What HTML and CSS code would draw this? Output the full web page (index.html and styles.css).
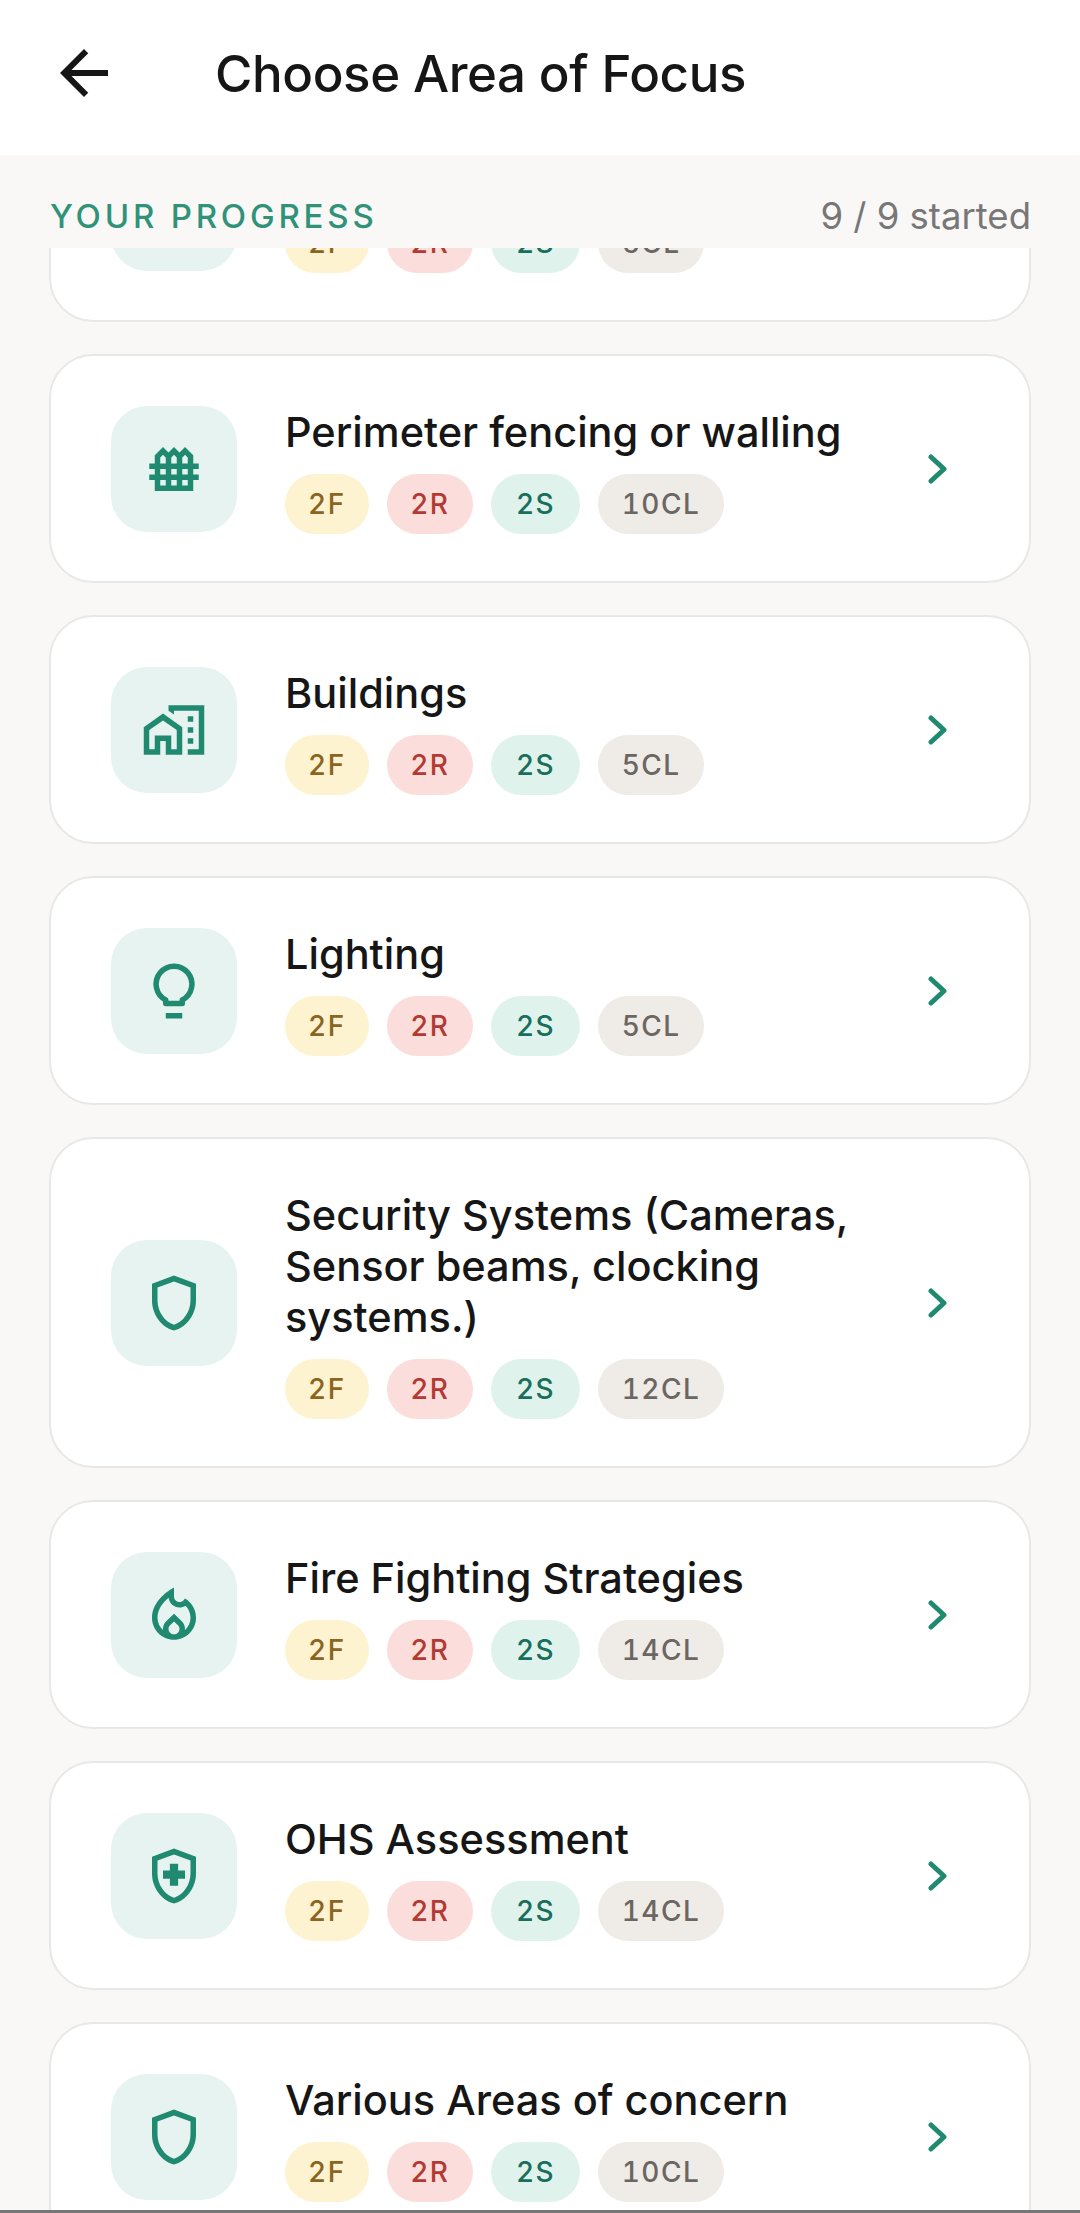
FILE: index.html
```html
<!DOCTYPE html>
<html lang="en">
  <head>
    <meta charset="UTF-8" />
    <meta name="viewport" content="width=device-width, initial-scale=1.0" />
    <title>Choose Area of Focus</title>
    <link rel="stylesheet" href="styles.css">
  </head>

  <body>
    <header class="topbar">
      <svg class="back-icon" viewBox="0 0 24 24"><path d="M20 11H7.83l5.59-5.59L12 4l-8 8 8 8 1.41-1.41L7.83 13H20v-2z" /></svg>
      <h1>Choose Area of Focus</h1>
    </header>

    <div class="progress">
      <span class="progress-label">YOUR PROGRESS</span>
      <span class="progress-count">9 / 9 started</span>
    </div>

    <main class="list-clip">
      <div class="list">

        <!-- scrolled almost out of view -->
        <div class="card">
          <div class="tile"></div>
          <div class="card-body">
            <div class="card-title">Access Control</div>
            <div class="chips">
              <span class="chip chip-f">2F</span>
              <span class="chip chip-r">2R</span>
              <span class="chip chip-s">2S</span>
              <span class="chip chip-cl">6CL</span>
            </div>
          </div>
          <svg class="chevron" viewBox="0 0 20 30"><path d="M3 3l13 12L3 27" /></svg>
        </div>

        <div class="card">
          <div class="tile">
            <svg class="tile-icon" viewBox="0 0 24 24"><path d="M21 12v-2h-2V7l-3-3-2 2-2-2-2 2-2-2-3 3v3H3v2h2v2H3v2h2v4h14v-4h2v-2h-2v-2h2z M16 6.83l1 1V10h-2V7.83l.41-.41.59-.59z M12 6.83l1 1V10h-2V7.83l.41-.41.59-.59z M11 14v-2h2v2h-2z M13 16v2h-2v-2h2z M9 10H7V7.83l1-1 .59.59.41.41V10z M7 12h2v2H7v-2z M7 16h2v2H7v-2z M17 18h-2v-2h2v2z M17 14h-2v-2h2v2z" /></svg>
          </div>
          <div class="card-body">
            <div class="card-title">Perimeter fencing or walling</div>
            <div class="chips">
              <span class="chip chip-f">2F</span>
              <span class="chip chip-r">2R</span>
              <span class="chip chip-s">2S</span>
              <span class="chip chip-cl">10CL</span>
            </div>
          </div>
          <svg class="chevron" viewBox="0 0 20 30"><path d="M3 3l13 12L3 27" /></svg>
        </div>

        <div class="card">
          <div class="tile">
            <svg class="tile-icon" viewBox="0 0 24 24"><path d="M1 11v10h6v-5h2v5h6V11L8 6 1 11z M13 19h-2v-5H5v5H3v-7l5-3.5 5 3.5v7z M10 3v1.97l2 1.43V5h9v14h-4v2h6V3H10z M17 7h2v2h-2z M17 11h2v2h-2z M17 15h2v2h-2z" /></svg>
          </div>
          <div class="card-body">
            <div class="card-title">Buildings</div>
            <div class="chips">
              <span class="chip chip-f">2F</span>
              <span class="chip chip-r">2R</span>
              <span class="chip chip-s">2S</span>
              <span class="chip chip-cl">5CL</span>
            </div>
          </div>
          <svg class="chevron" viewBox="0 0 20 30"><path d="M3 3l13 12L3 27" /></svg>
        </div>

        <div class="card">
          <div class="tile">
            <svg class="tile-icon tile-icon-line" viewBox="0 0 24 24"><path d="M9 15.27A6.5 6.5 0 1 1 15 15.27V16.5H9Z" /><path d="M9 21h6" /></svg>
          </div>
          <div class="card-body">
            <div class="card-title">Lighting</div>
            <div class="chips">
              <span class="chip chip-f">2F</span>
              <span class="chip chip-r">2R</span>
              <span class="chip chip-s">2S</span>
              <span class="chip chip-cl">5CL</span>
            </div>
          </div>
          <svg class="chevron" viewBox="0 0 20 30"><path d="M3 3l13 12L3 27" /></svg>
        </div>

        <div class="card">
          <div class="tile">
            <svg class="tile-icon" viewBox="0 0 24 24"><path d="M12 2L4 5v6.09c0 5.05 3.41 9.76 8 10.91 4.59-1.15 8-5.86 8-10.91V5l-8-3z M18 11.09c0 4-2.55 7.7-6 8.83-3.45-1.13-6-4.82-6-8.83v-4.7l6-2.25 6 2.25v4.7z" /></svg>
          </div>
          <div class="card-body">
            <div class="card-title">Security Systems (Cameras, Sensor beams, clocking systems.)</div>
            <div class="chips">
              <span class="chip chip-f">2F</span>
              <span class="chip chip-r">2R</span>
              <span class="chip chip-s">2S</span>
              <span class="chip chip-cl">12CL</span>
            </div>
          </div>
          <svg class="chevron" viewBox="0 0 20 30"><path d="M3 3l13 12L3 27" /></svg>
        </div>

        <div class="card">
          <div class="tile">
            <svg class="tile-icon" viewBox="0 0 24 24"><path d="M16 6l-.44.55c-.42.52-.98.75-1.54.75C13 7.3 12 6.52 12 5.3V2S4 6 4 13c0 4.42 3.58 8 8 8s8-3.58 8-8c0-2.96-1.61-5.62-4-7z M12 19c-1.1 0-2-.87-2-1.94 0-.51.2-.97.58-1.34L12 14.33l1.43 1.4c.37.37.57.82.57 1.33 0 1.07-.9 1.94-2 1.94z M15.96 17.5c.04-.36.22-1.89-1.13-3.22L12 11.5l-2.83 2.78C7.81 15.62 8 17.16 8.04 17.5 6.79 16.4 6 14.79 6 13c0-3.16 2.13-5.65 4.03-7.25.23 1.99 1.93 3.55 3.99 3.55.78 0 1.54-.23 2.18-.66C17.34 9.78 18 11.35 18 13c0 1.79-.79 3.4-2.04 4.5z" /></svg>
          </div>
          <div class="card-body">
            <div class="card-title">Fire Fighting Strategies</div>
            <div class="chips">
              <span class="chip chip-f">2F</span>
              <span class="chip chip-r">2R</span>
              <span class="chip chip-s">2S</span>
              <span class="chip chip-cl">14CL</span>
            </div>
          </div>
          <svg class="chevron" viewBox="0 0 20 30"><path d="M3 3l13 12L3 27" /></svg>
        </div>

        <div class="card">
          <div class="tile">
            <svg class="tile-icon" viewBox="0 0 24 24"><path d="M10.5 13H8v-3h2.5V7.5h3V10H16v3h-2.5v2.5h-3V13z M12 4.14l6 2.25v4.7c0 4.02-2.55 7.7-6 8.83-3.45-1.13-6-4.81-6-8.83v-4.7l6-2.25z M12 2L4 5v6.09c0 5.05 3.41 9.76 8 10.91 4.59-1.15 8-5.86 8-10.91V5l-8-3z" /></svg>
          </div>
          <div class="card-body">
            <div class="card-title">OHS Assessment</div>
            <div class="chips">
              <span class="chip chip-f">2F</span>
              <span class="chip chip-r">2R</span>
              <span class="chip chip-s">2S</span>
              <span class="chip chip-cl">14CL</span>
            </div>
          </div>
          <svg class="chevron" viewBox="0 0 20 30"><path d="M3 3l13 12L3 27" /></svg>
        </div>

        <div class="card">
          <div class="tile">
            <svg class="tile-icon" viewBox="0 0 24 24"><path d="M12 2L4 5v6.09c0 5.05 3.41 9.76 8 10.91 4.59-1.15 8-5.86 8-10.91V5l-8-3z M18 11.09c0 4-2.55 7.7-6 8.83-3.45-1.13-6-4.82-6-8.83v-4.7l6-2.25 6 2.25v4.7z" /></svg>
          </div>
          <div class="card-body">
            <div class="card-title">Various Areas of concern</div>
            <div class="chips">
              <span class="chip chip-f">2F</span>
              <span class="chip chip-r">2R</span>
              <span class="chip chip-s">2S</span>
              <span class="chip chip-cl">10CL</span>
            </div>
          </div>
          <svg class="chevron" viewBox="0 0 20 30"><path d="M3 3l13 12L3 27" /></svg>
        </div>

      </div>
    </main>

    <div class="bottom-edge"></div>
  </body>
</html>
```

FILE: styles.css
```css
body {
  font-family: "Inter", sans-serif;
  margin: 0;
  padding: 0;
  height: 100vh;
  overflow: hidden;
  display: flex;
  flex-direction: column;
  background-color: #f9f8f6;
  color: #161616;
}

.topbar {
  flex: none;
  height: 155px;
  padding: 0 0 9px 48px;
  box-sizing: border-box;
  background: #fff;
  display: flex;
  align-items: center;
  gap: 95px;
}

.topbar h1 {
  margin: 0;
  font-size: 51px;
  font-weight: 500;
  letter-spacing: -0.4px;
}

.back-icon {
  width: 72px;
  height: 72px;
  fill: #161616;
}

.progress {
  flex: none;
  height: 93px;
  padding: 28px 49px 0 50px;
  box-sizing: border-box;
  display: flex;
  justify-content: space-between;
  align-items: center;
}

.progress-label {
  font-size: 33px;
  font-weight: 500;
  letter-spacing: 3.8px;
  color: #2f9279;
}

.progress-count {
  font-size: 36.5px;
  color: #777;
}

.list-clip {
  flex: 1;
  overflow: hidden;
  padding: 0 49px;
}

.list {
  margin-top: -155px;
  display: flex;
  flex-direction: column;
  gap: 32px;
}

.card {
  flex: none;
  display: flex;
  align-items: center;
  padding: 49px 81px 49px 60px;
  background: #fff;
  border: 2px solid #e8e8e6;
  border-radius: 44px;
}

.tile {
  flex: none;
  width: 126px;
  height: 126px;
  border-radius: 36px;
  background: #e6f3f0;
  display: flex;
  align-items: center;
  justify-content: center;
}

.tile-icon {
  width: 66px;
  height: 66px;
  fill: #1f8a70;
  fill-rule: evenodd;
}

.tile-icon-line {
  fill: none;
  stroke: #1f8a70;
  stroke-width: 2;
  stroke-linejoin: round;
}

.card-body {
  flex: 1;
  margin: 2px 30px -2px 48px;
}

.card-title {
  font-size: 41.5px;
  font-weight: 450;
  line-height: 51px;
  margin-bottom: 16px;
}

.chips {
  display: flex;
  gap: 18px;
}

.chip {
  height: 60px;
  padding: 0 23.5px;
  border-radius: 30px;
  display: flex;
  align-items: center;
  font-size: 28px;
  font-weight: 500;
  letter-spacing: 1.5px;
  font-variant-numeric: tabular-nums;
}

.chip-f {
  padding: 0 23px;
  background: #fef3d0;
  color: #8a6420;
}

.chip-r {
  background: #fbdedb;
  color: #b33a32;
}

.chip-s {
  padding: 0 25px;
  background: #dff3ec;
  color: #1a6e5c;
}

.chip-cl {
  background: #efebe6;
  color: #6b6661;
}

.chevron {
  flex: none;
  width: 20px;
  height: 30px;
  fill: none;
  stroke: #1f8a70;
  stroke-width: 5;
  stroke-linecap: round;
  stroke-linejoin: round;
}

.bottom-edge {
  flex: none;
  height: 3px;
  background: #777;
}
```
